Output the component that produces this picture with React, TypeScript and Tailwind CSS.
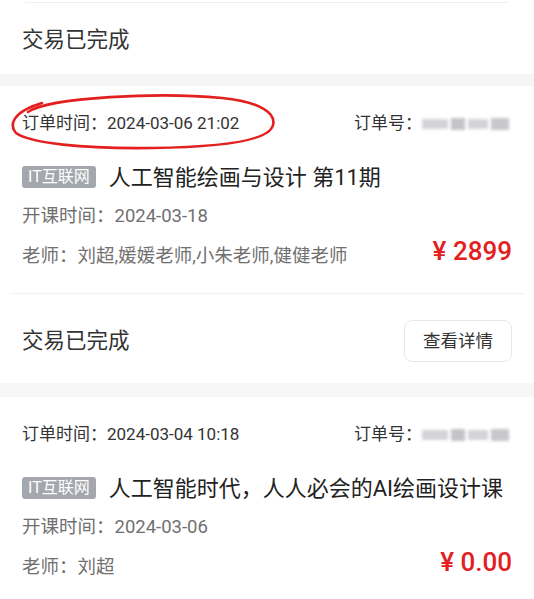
import React from "react";

type Order = {
  time: string;
  title: string;
  start: string;
  teachers: string;
  price: string;
};

const orders: Order[] = [
  {
    time: "2024-03-06 21:02",
    title: "人工智能绘画与设计 第11期",
    start: "2024-03-18",
    teachers: "刘超,媛媛老师,小朱老师,健健老师",
    price: "2899",
  },
  {
    time: "2024-03-04 10:18",
    title: "人工智能时代，人人必会的AI绘画设计课",
    start: "2024-03-06",
    teachers: "刘超",
    price: "0.00",
  },
];

function BlurredNumber() {
  // order number is pixelated out in the screenshot
  return (
    <div className="flex items-center gap-[3px] w-[90px] h-[14px] blur-[1.5px]">
      <div className="h-[10px] w-[26px] bg-[#d4d4d8]" />
      <div className="h-[12px] w-[14px] bg-[#c4c4c8]" />
      <div className="h-[10px] w-[20px] bg-[#d4d4d8]" />
      <div className="h-[12px] w-[18px] bg-[#c8c8cc]" />
    </div>
  );
}

function Circle() {
  return (
    <svg
      className="absolute left-[10px] top-[6px] pointer-events-none"
      width="268"
      height="60"
      viewBox="0 0 268 60"
      fill="none"
    >
      <path
        d="M18 20 C40 5, 150 0, 212 6 C252 10, 266 22, 263 33 C260 47, 222 55, 142 56 C72 57, 20 51, 6 41 C-1 33, 2 20, 32 11"
        stroke="#e3201f"
        strokeWidth="2.6"
        strokeLinecap="round"
      />
    </svg>
  );
}

function OrderCard({ order, marked, button }: { order: Order; marked?: boolean; button?: boolean }) {
  return (
    <div className="bg-white">
      <div className="relative px-[22px] pt-[23px] pb-[19px]">
        {marked && <Circle />}
        <div className="flex h-[30px] items-center justify-between text-[17px] text-[#333]">
          <span>订单时间：{order.time}</span>
          <div className="flex items-center">
            <span>订单号：</span>
            <BlurredNumber />
          </div>
        </div>
        <div className="mt-[21px] flex h-[34px] items-center gap-[13px]">
          <span className="flex h-[22px] items-center rounded-[3px] bg-[#a4a7ae] px-[6px] text-[16px] leading-none text-white">
            IT互联网
          </span>
          <span className="whitespace-nowrap text-[22px] text-[#222]">{order.title}</span>
        </div>
        <div className="mt-[6px] flex h-[34px] items-center text-[18.5px] text-[#707070]">
          开课时间：{order.start}
        </div>
        <div className="mt-[6px] flex h-[34px] items-center justify-between">
          <span className="whitespace-nowrap text-[18.5px] text-[#707070]">老师：{order.teachers}</span>
          <span className="mb-[12px] text-[26px] font-medium text-[#e3201f]">¥ {order.price}</span>
        </div>
      </div>
      <div className="mx-[10px] h-px bg-[#f1f1f1]" />
      <Footer button={button} />
    </div>
  );
}

function Footer({ button, short }: { button?: boolean; short?: boolean }) {
  return (
    <div
      className={
        short
          ? "flex h-[71px] items-center justify-between px-[22px] pt-[3px]"
          : "flex h-[89px] items-center justify-between px-[22px] pt-[5px]"
      }
    >
      <span className="text-[21.5px] text-[#333]">交易已完成</span>
      {button && (
        <button className="flex h-[42px] items-center rounded-[8px] border border-[#e8e8e8] px-[18px] text-[17.5px] text-[#333]">
          查看详情
        </button>
      )}
    </div>
  );
}

export default function App() {
  return (
    <div className="h-[599px] w-full overflow-hidden bg-[#f6f6f6] font-[Roboto,'Noto_Sans_CJK_SC',sans-serif]">
      <div className="bg-white">
        <div className="h-[2px]" />
        <div className="mx-[25px] h-px bg-[#f0f0f0]" />
        <Footer short />
      </div>
      <div className="h-[12px]" />
      <OrderCard order={orders[0]} marked button />
      <div className="h-[14px]" />
      <OrderCard order={orders[1]} button />
    </div>
  );
}
